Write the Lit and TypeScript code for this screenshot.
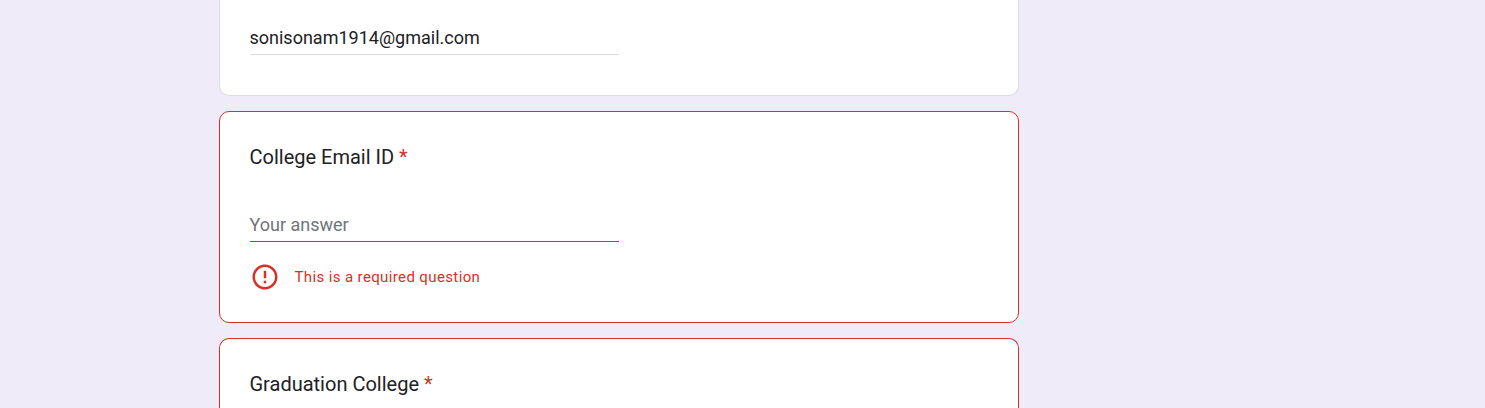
import { LitElement, html, css, nothing } from "lit";
import { customElement, property } from "lit/decorators.js";

@customElement("question-card")
class QuestionCard extends LitElement {
  @property() heading = "";
  @property({ type: Boolean }) collapsed = false;
  static styles = css`
    :host { display: block; box-sizing: border-box; height: 212px; flex: none; background: #fff; border: 1px solid #d93025; border-radius: 10px; padding: 30px 30px 30px 29.5px; }
    :host([collapsed]) { height: 70px; border-bottom: none; border-radius: 10px 10px 0 0; padding-bottom: 0; }
    .heading { font-size: 20px; line-height: 30px; color: #202124; }
    .star { color: #d93025; padding-left: 5px; }
    .field { box-sizing: border-box; width: 369px; height: 35px; margin-top: 35px; border-bottom: 1px solid #d93025; font-size: 18px; line-height: 36px; color: #70757a; }
    .error { display: flex; align-items: center; margin-top: 20px; height: 30px; color: #d93025; font-size: 15px; letter-spacing: 0.375px; }
    .icon { width: 30px; height: 30px; margin-right: 15px; fill: currentColor; }
  `;
  render() {
    return html`
      <div class="heading">${this.heading}<span class="star">*</span></div>
      ${this.collapsed ? nothing : html`
        <div class="field">Your answer</div>
        <div class="error">
          <svg class="icon" viewBox="0 0 24 24"><path d="M11 15h2v2h-2zm0-8h2v6h-2zm.99-5C6.47 2 2 6.48 2 12s4.47 10 9.99 10C17.52 22 22 17.52 22 12S17.52 2 11.99 2zM12 20c-4.42 0-8-3.58-8-8s3.58-8 8-8 8 3.58 8 8-3.58 8-8 8z"/></svg>
          <span>This is a required question</span>
        </div>`}`;
  }
}

@customElement("app-root")
class AppRoot extends LitElement {
  static styles = css`
    :host { display: block; box-sizing: border-box; height: 408px; overflow: hidden; background: #f0ebf8; font-family: Roboto, sans-serif; }
    .page { display: flex; flex-direction: column; gap: 15px; width: 800px; margin-left: 219px; }
    .first { box-sizing: border-box; height: 96px; background: #fff; border: 1px solid #dadce0; border-top: none; border-radius: 0 0 10px 10px; padding: 20px 30px 0 29.5px; }
    .value { box-sizing: border-box; width: 369px; height: 35px; border-bottom: 1px solid #dadce0; font-size: 18px; line-height: 36px; color: #202124; }
  `;
  render() {
    return html`<main class="page">
      <section class="first"><div class="value">sonisonam1914@gmail.com</div></section>
      <question-card heading="College Email ID"></question-card>
      <question-card heading="Graduation College" collapsed></question-card>
    </main>`;
  }
}
